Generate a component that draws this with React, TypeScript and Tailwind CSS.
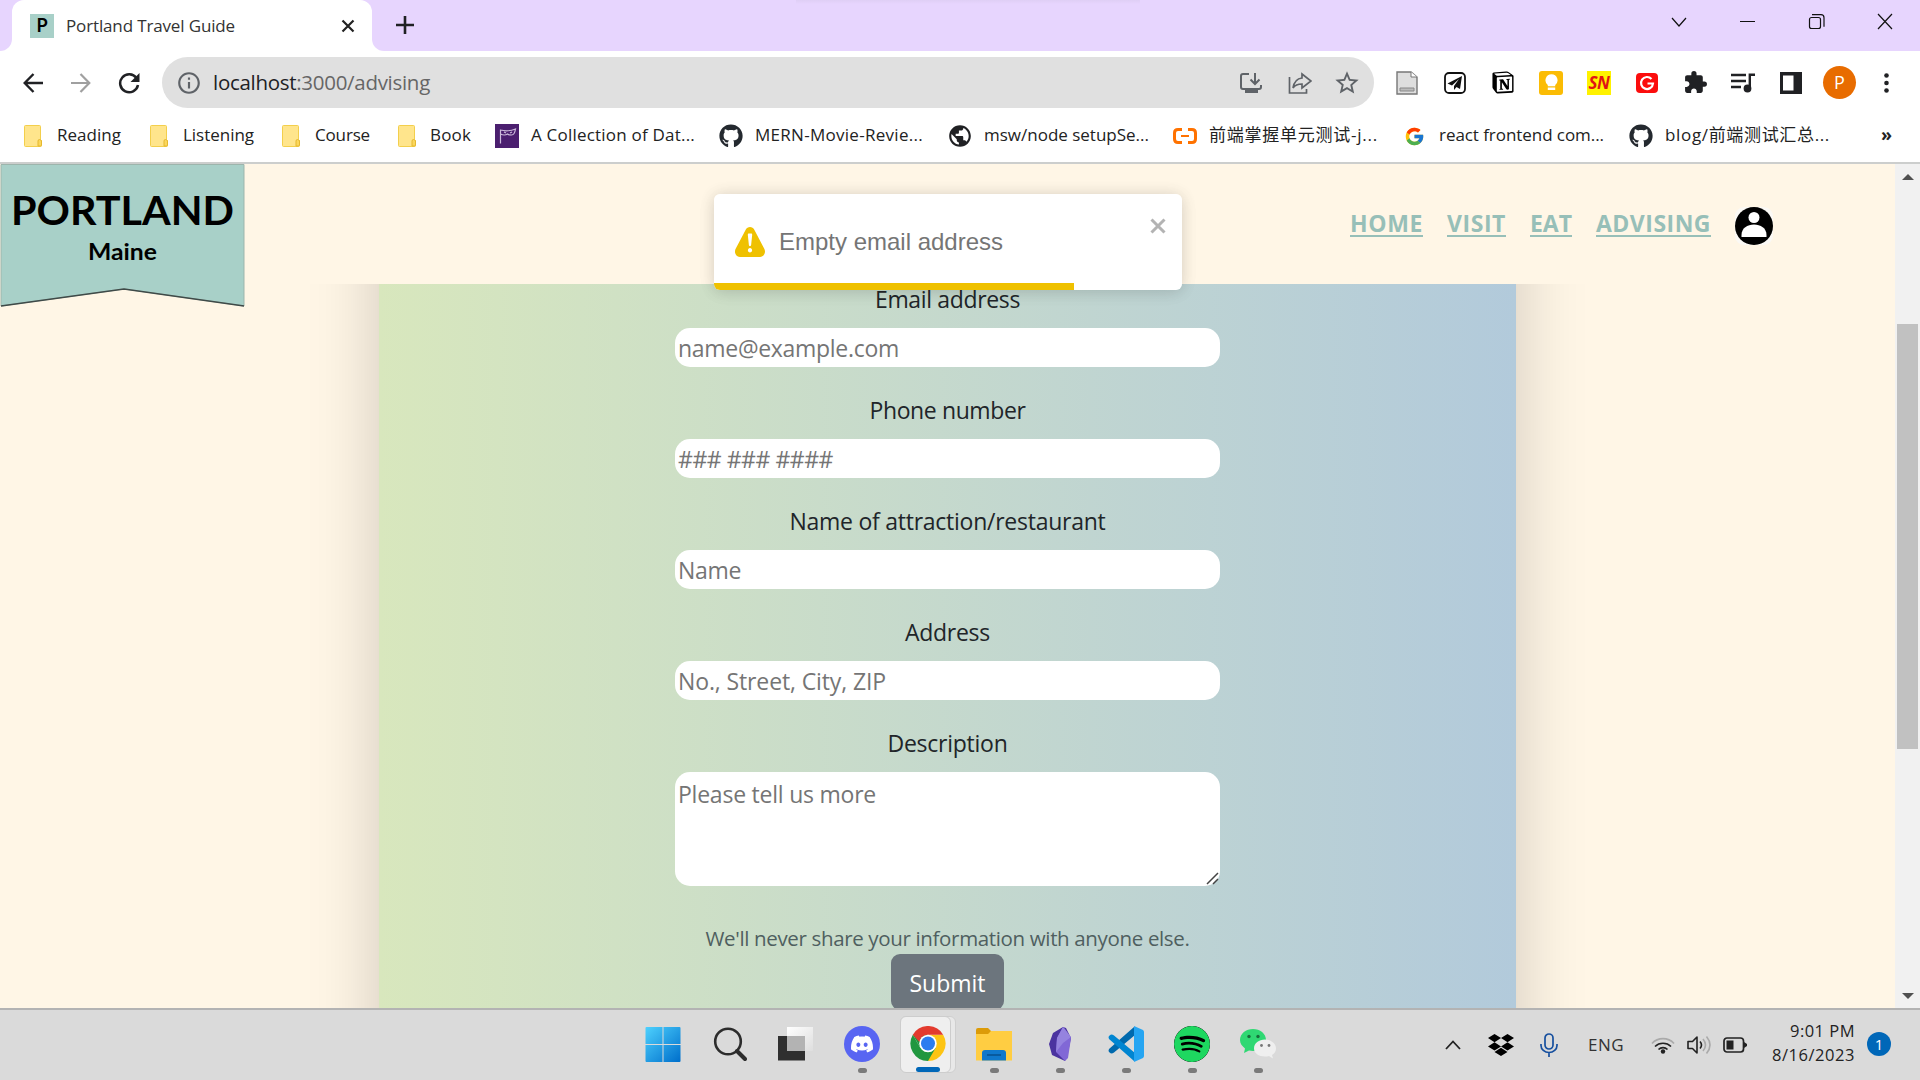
import { useLayoutEffect, useRef, useState, type ReactNode } from "react";
import { FaGithub, FaDropbox } from "react-icons/fa";
import { FcGoogle } from "react-icons/fc";
import { MdExtension, MdPublic, MdStarBorder, MdOutlineInfo } from "react-icons/md";
import { SiDiscord, SiSpotify, SiNotion } from "react-icons/si";

/** One line of text whose letter spacing is adjusted so it fills its box. */
function Fit({ className = "", children }: { className?: string; children: ReactNode }) {
  const box = useRef<HTMLSpanElement>(null);
  const inner = useRef<HTMLSpanElement>(null);
  const [spacing, setSpacing] = useState(0);
  useLayoutEffect(() => {
    if (!box.current || !inner.current) return;
    const count = (inner.current.textContent ?? "").length;
    const natural = inner.current.getBoundingClientRect().width;
    setSpacing((box.current.getBoundingClientRect().width - natural) / count);
  }, []);
  return (
    <span ref={box} className={`block shrink-0 whitespace-nowrap ${className}`}>
      <span ref={inner} style={{ letterSpacing: `${spacing}px` }}>
        {children}
      </span>
    </span>
  );
}

function Folder() {
  return (
    <svg viewBox="0 0 18 22" className="h-[22px] w-[18px] shrink-0">
      <path d="M.5 1.5q0-1 1-1h14q1 0 1 1v13q1 .5 1 2v4q0 1-1 1h-15q-1 0-1-1z" fill="#ffe58c" stroke="#f3cf4c" />
      <path d="M14 21v-5q0-1.500 1.500-1.500t2 1.500v4q0 1-1 1z" fill="#fbd75c" stroke="#e5b82f" />
    </svg>
  );
}

function Bookmark({ icon, gap, width, label }: { icon: ReactNode; gap: string; width: string; label: string }) {
  return (
    <div className={`flex shrink-0 items-center ${gap}`}>
      {icon}
      <Fit className={`pb-0.5 ${width}`}>{label}</Fit>
    </div>
  );
}

function TabStrip() {
  return (
    <div className="flex h-[51px] shrink-0 bg-[#e7d5fe]">
      <div className="flex w-3 items-end bg-white">
        <div className="h-full w-full rounded-br-xl bg-[#e7d5fe]" />
      </div>
      <div className="w-[360px] bg-[#e7d5fe]">
        <div className="flex h-full items-center rounded-t-xl bg-white pl-[18px]">
          <div className="flex h-6 w-6 items-center justify-center bg-[#a8d0c8] font-['Lato'] text-[18px] font-bold text-black">P</div>
          <Fit className="ml-3 w-[169px] text-[17px] text-[#333]">Portland Travel Guide</Fit>
          <svg viewBox="0 0 14 14" className="ml-[106px] h-[14px] w-[14px]">
            <path d="M1.500 1.500l11 11M12.500 1.500l-11 11" stroke="#222" strokeWidth="2.200" />
          </svg>
        </div>
      </div>
      <div className="w-3 bg-white">
        <div className="h-full w-full rounded-bl-xl bg-[#e7d5fe]" />
      </div>
      <svg viewBox="0 0 18 18" className="mt-4 ml-3 h-[18px] w-[18px]">
        <path d="M9 0v18M0 9h18" stroke="#202124" strokeWidth="2.600" />
      </svg>
      <div className="ml-[382px] h-1 w-[344px] bg-linear-to-b from-[#dfcff5] to-[#e7d5fe]" />
      <svg viewBox="0 0 224 18" className="mt-[13px] ml-auto mr-[27px] h-[18px] w-[224px]" fill="none" stroke="#111" strokeWidth="1.200">
        <path d="M3 5l7 8 7-8M71 8.500h15" />
        <rect x="140.500" y="4.500" width="11" height="11" rx="2" />
        <path d="M143 1.700h9q3 0 3 3v9M209 1l14 15M223 1l-14 15" />
      </svg>
    </div>
  );
}

function Toolbar() {
  return (
    <div className="flex h-[63px] shrink-0 items-center bg-white">
      <svg viewBox="0 0 20 20" className="ml-[23px] h-5 w-5" fill="none" stroke="#202124" strokeWidth="2.400">
        <path d="M20 10H2M10.500 1L1.700 10l8.800 9" />
      </svg>
      <svg viewBox="0 0 20 20" className="ml-7 h-5 w-5" fill="none" stroke="#a0a0a0" strokeWidth="2.200">
        <path d="M0 10h18M9.500 1l8.800 9-8.800 9" />
      </svg>
      <svg viewBox="0 0 22 22" className="ml-[27px] h-[22px] w-[22px]" fill="none" stroke="#202124" strokeWidth="2.500">
        <path d="M18.500 6A9 9 0 1 0 20 13" />
        <path d="M21.500 1v9h-9z" fill="#202124" stroke="none" />
      </svg>
      <div className="ml-[22px] flex h-[51px] w-[1212px] items-center rounded-full bg-[#e0e0e0]">
        <MdOutlineInfo className="ml-[14px] h-[26px] w-[26px] text-[#5f6368]" />
        <Fit className="ml-[11px] w-[217px] text-[20.500px] text-[#666]">
          <span className="text-[#202124]">localhost</span>:3000/advising
        </Fit>
        <svg viewBox="0 0 22 22" className="ml-auto h-[22px] w-[22px]" fill="none" stroke="#5f6368" strokeWidth="2">
          <path d="M9 2H3Q1 2 1 4v11q0 2 2 2h16q2 0 2-2v-2M15 1v11M10.500 7.500L15 12l4.500-4.500" />
          <path d="M5 17h13v4H5z" fill="#5f6368" stroke="none" />
        </svg>
        <svg viewBox="0 0 24 24" className="ml-[26px] h-6 w-6" fill="none" stroke="#5f6368" strokeWidth="1.700">
          <path d="M1.500 6v16h17v-4M14 3l9 7-9 7v-4c-4 0-7 1-9 4 1-6 4-9.500 9-10z" />
        </svg>
        <MdStarBorder className="mr-[13px] ml-[21px] h-[28px] w-[28px] text-[#5f6368]" />
      </div>
      <svg viewBox="0 0 22 24" className="ml-[22px] h-6 w-[22px]">
        <path d="M1 1h14l6 5v17H1z" fill="#dedede" stroke="#777" strokeWidth="1.400" />
        <path d="M15 1v5h6" fill="#fff" stroke="#777" />
        <path d="M4 17h14v3H4z" fill="#bbb" stroke="#888" />
      </svg>
      <svg viewBox="0 0 22 22" className="ml-[26px] h-[22px] w-[22px]">
        <rect x="1" y="1" width="20" height="20" rx="4" fill="#fff" stroke="#111" strokeWidth="1.800" />
        <path d="M18 4L3.500 11.500l4.500 2L15 7l-5 7v4l2.500-3 3.500 2z" fill="#111" />
      </svg>
      <SiNotion className="ml-[26px] h-[23px] w-[22px] text-black" />
      <div className="ml-[25px] flex h-6 w-6 items-center justify-center rounded-[3px] bg-[#fbbc04]">
        <svg viewBox="0 0 14 18" className="h-[17px] w-[13px]" fill="#fff">
          <path d="M7 0a6.500 6.500 0 0 1 4 11.600V13H3v-1.400A6.500 6.500 0 0 1 7 0zM3 14.500h8V17H3z" />
        </svg>
      </div>
      <div className="ml-6 flex h-6 w-6 items-center justify-center bg-[#fff200] font-['Open_Sans'] text-[17px] font-bold tracking-tight text-[#e01414] italic">SN</div>
      <div className="ml-[25px] flex h-5 w-[22px] items-center justify-center rounded-[4px] bg-[#fb0d0d]">
        <svg viewBox="0 0 16 16" className="h-4 w-4" fill="none" stroke="#fff" strokeWidth="2.200">
          <path d="M12.500 4A6 6 0 1 0 14 8.500H8.500" />
        </svg>
      </div>
      <MdExtension className="ml-[25px] h-[25px] w-[25px] text-[#202124]" />
      <svg viewBox="0 0 24 21" className="ml-[23px] h-[21px] w-6" stroke="#202124" strokeWidth="2.400">
        <path d="M0 3h15M0 9h15M0 15h10" />
        <path d="M18.800 17V2.800H24" fill="none" />
        <circle cx="16.500" cy="16.500" r="2.700" fill="#202124" />
      </svg>
      <svg viewBox="0 0 22 22" className="ml-[25px] h-[22px] w-[22px]">
        <path d="M0 0h22v22H0z" fill="#202124" />
        <path d="M3 3.500h10.500v15H3z" fill="#fff" />
      </svg>
      <div className="ml-[21px] flex h-[33px] w-[33px] items-center justify-center rounded-full bg-[#e86c00] font-['Open_Sans'] text-[18px] text-white">P</div>
      <svg viewBox="0 0 5 20" className="ml-7 h-5 w-[5px]" fill="#202124">
        <circle cx="2.500" cy="2.500" r="2.300" />
        <circle cx="2.500" cy="10" r="2.300" />
        <circle cx="2.500" cy="17.500" r="2.300" />
      </svg>
    </div>
  );
}

function Bookmarks() {
  return (
    <div className="flex h-12 shrink-0 items-center bg-white pb-1 pl-6 text-[17px] leading-6 text-[#222]">
      <Bookmark icon={<Folder />} gap="gap-[15px]" width="w-[64px]" label="Reading" />
      <div className="w-[29px] shrink-0" />
      <Bookmark icon={<Folder />} gap="gap-[15px]" width="w-[71px]" label="Listening" />
      <div className="w-[28px] shrink-0" />
      <Bookmark icon={<Folder />} gap="gap-[15px]" width="w-[55px]" label="Course" />
      <div className="w-[28px] shrink-0" />
      <Bookmark icon={<Folder />} gap="gap-[14px]" width="w-[41px]" label="Book" />
      <div className="w-[24px] shrink-0" />
      <Bookmark
        icon={
          <svg viewBox="0 0 24 24" className="h-6 w-6 shrink-0">
            <path d="M0 0h24v24H0z" fill="#4b1f6f" />
            <path d="M5.500 5.500v14M5.500 6q7 2 15-1-1 6-4 6-3 0-4-1-3 2-7 0M9 8l2 1M15 9l2-1" fill="none" stroke="#cdbcdc" strokeWidth="1.200" />
          </svg>
        }
        gap="gap-3"
        width="w-[164px]"
        label="A Collection of Dat..."
      />
      <div className="w-[24px] shrink-0" />
      <Bookmark icon={<FaGithub className="h-6 w-6 text-[#24292f]" />} gap="gap-3" width="w-[168px]" label="MERN-Movie-Revie..." />
      <div className="w-[24px] shrink-0" />
      <Bookmark icon={<MdPublic className="h-[26px] w-[26px] text-[#202124]" />} gap="gap-[11px]" width="w-[165px]" label="msw/node setupSe..." />
      <div className="w-[24px] shrink-0" />
      <Bookmark
        icon={
          <svg viewBox="0 0 24 16" className="h-4 w-6 shrink-0" fill="none" stroke="#ff7200" strokeWidth="3">
            <path d="M9 1.500H5Q1.500 1.500 1.500 5v6q0 3.500 3.500 3.500h4M15 1.500h4q3.500 0 3.500 3.500v6q0 3.500-3.500 3.500h-4" />
            <path d="M8 8h8" strokeWidth="2" />
          </svg>
        }
        gap="gap-3"
        width="w-[169px]"
        label="前端掌握单元测试-j..."
      />
      <div className="w-[26px] shrink-0" />
      <Bookmark icon={<FcGoogle className="h-[21px] w-[21px]" />} gap="gap-[14px]" width="w-[165px]" label="react frontend com..." />
      <div className="w-[25px] shrink-0" />
      <Bookmark icon={<FaGithub className="h-6 w-6 text-[#24292f]" />} gap="gap-3" width="w-[165px]" label="blog/前端测试汇总..." />
      <span className="ml-[51px] pb-1 text-[18px] font-bold">»</span>
    </div>
  );
}

function SiteHeader() {
  const link = "text-[23px] font-bold leading-8 underline decoration-2 underline-offset-[3px]";
  return (
    <header className="relative z-10 flex h-[120px] shrink-0 items-start bg-[#fff6e6] text-[#97bfb8]">
      <svg viewBox="0 0 246 144" className="absolute top-0 left-0 h-[144px] w-[246px]">
        <path d="M1 .5h243v141.500L124 125 1 142z" fill="#a8d0c8" stroke="#9db5ac" />
        <path d="M1 142l123-17 120 17" fill="none" stroke="#3f4a48" strokeWidth="1.600" />
        <text x="11" y="60.500" textLength="223" lengthAdjust="spacingAndGlyphs" className="font-['Lato'] text-[40px] font-bold">PORTLAND</text>
        <text x="88" y="96" textLength="69" lengthAdjust="spacingAndGlyphs" className="font-['Lato'] text-[23px] font-bold">Maine</text>
      </svg>
      <nav className="mt-[43px] ml-[1350px] flex items-start">
        <a className={link}><Fit className="w-[73px]">HOME</Fit></a>
        <a className={`${link} ml-6`}><Fit className="w-[59px]">VISIT</Fit></a>
        <a className={`${link} ml-6`}><Fit className="w-[42px]">EAT</Fit></a>
        <a className={`${link} ml-6`}><Fit className="w-[115px]">ADVISING</Fit></a>
        <svg viewBox="0 0 38 38" className="ml-6 h-[38px] w-[38px]">
          <rect width="38" height="38" rx="9" fill="#fbf9f5" />
          <circle cx="19" cy="19" r="19" fill="#000" />
          <circle cx="19" cy="10.500" r="5.500" fill="#fff" />
          <path d="M6.500 30v-2c0-7 6-10.500 12.500-10.500S31.500 21 31.500 28v2z" fill="#fff" />
        </svg>
      </nav>
    </header>
  );
}

function Field({ label, labelWidth, hint, hintWidth }: { label: string; labelWidth: string; hint: string; hintWidth: string }) {
  return (
    <div className="mb-[25px] flex w-full flex-col items-center">
      <Fit className={`${labelWidth} leading-9 text-[#212529]`}>{label}</Fit>
      <div className="mt-[11px] flex h-[39px] w-full items-center rounded-[15px] bg-white pt-0.5 pl-[3px] text-[#757575]">
        <Fit className={hintWidth}>{hint}</Fit>
      </div>
    </div>
  );
}

function AdviceForm() {
  return (
    <main className="-mt-[120px] ml-[379px] h-[1000px] w-[1137px] shrink-0 bg-linear-to-r from-[#d8e7bd] to-[#b2cadb] pt-[117px] shadow-[0_0_66px_rgba(0,0,0,0.19)]">
      <form className="ml-[296px] flex w-[545px] flex-col items-center text-[23px]">
        <Field label="Email address" labelWidth="w-[145px]" hint="name@example.com" hintWidth="w-[221px]" />
        <Field label="Phone number" labelWidth="w-[156px]" hint="### ### ####" hintWidth="w-[155px]" />
        <Field label="Name of attraction/restaurant" labelWidth="w-[316px]" hint="Name" hintWidth="w-[63px]" />
        <Field label="Address" labelWidth="w-[85px]" hint="No., Street, City, ZIP" hintWidth="w-[208px]" />
        <Fit className="w-[120px] leading-9 text-[#212529]">Description</Fit>
        <div className="mt-[11px] flex h-[114px] w-full items-start justify-between rounded-[15px] bg-white pt-1 pl-[3px] text-[#757575]">
          <Fit className="w-[198px] leading-9">Please tell us more</Fit>
          <svg viewBox="0 0 13 13" className="mr-px mb-px h-[13px] w-[13px] self-end">
            <path d="M1 12L12 1M7 12l5-5" stroke="#444" strokeWidth="1.500" />
          </svg>
        </div>
        <Fit className="mt-[37px] w-[484px] text-[20.500px] leading-[31px] text-[#4f5f60]">We'll never share your information with anyone else.</Fit>
        <div className="flex h-14 w-[113px] shrink-0 items-center justify-center rounded-[9px] bg-[#6c757d] pt-0.5 text-white">
          <Fit className="w-[76px]">Submit</Fit>
        </div>
      </form>
    </main>
  );
}

function Toast() {
  return (
    <div className="absolute top-[30px] left-[714px] z-20 h-24 w-[468px] rounded-md shadow-[0_1px_15px_rgba(0,0,0,0.13),0_2px_20px_rgba(0,0,0,0.05)]">
      <div className="relative flex h-full items-start overflow-hidden rounded-md bg-white font-['Liberation_Sans'] text-[24px] text-[#757575]">
        <svg viewBox="0 0 24 24" className="mt-[33px] ml-[21px] h-[30px] w-[30px]">
          <path d="M23.320 17.191L15.438 2.184C14.728.833 13.416 0 11.996 0c-1.420 0-2.733.833-3.443 2.184L.533 17.448a4.744 4.744 0 000 4.368C1.243 23.167 2.555 24 3.975 24h16.050C22.220 24 24 22.044 24 19.632c0-.904-.251-1.746-.680-2.440zm-9.622 1.460c0 1.033-.724 1.823-1.698 1.823s-1.698-.790-1.698-1.822v-.043c0-1.028.724-1.822 1.698-1.822s1.698.790 1.698 1.822v.043zm.039-12.285l-.840 8.060c-.057.581-.408.943-.897.943-.490 0-.840-.367-.896-.942l-.840-8.065c-.057-.624.250-1.095.779-1.095h1.910c.528.005.840.476.784 1.100z" fill="#efc100" />
        </svg>
        <Fit className="mt-[30px] ml-[14px] w-[224px] leading-9">Empty email address</Fit>
        <svg viewBox="0 0 16 16" className="mt-6 ml-[147px] h-4 w-4">
          <path d="M1.500 1.500l13 13M14.500 1.500l-13 13" stroke="#b3b3b3" strokeWidth="3" />
        </svg>
        <div className="absolute bottom-0 left-0 h-[7px] w-[360px] bg-[#efc100]" />
      </div>
    </div>
  );
}

function Scrollbar() {
  return (
    <div className="flex w-[25px] shrink-0 flex-col items-center bg-[#f1f1f1]">
      <svg viewBox="0 0 12 6" className="mt-[10px] h-1.5 w-3" fill="#505050"><path d="M6 0l6 6H0z" /></svg>
      <div className="mt-36 h-[425px] w-[21px] bg-[#c1c1c1]" />
      <svg viewBox="0 0 12 6" className="mt-auto mb-[9px] h-1.5 w-3" fill="#505050"><path d="M0 0h12L6 6z" /></svg>
    </div>
  );
}

function TaskIcon({ children, mark = true }: { children: ReactNode; mark?: boolean }) {
  return (
    <div className="flex h-full w-[66px] shrink-0 flex-col items-center pt-4">
      <div className="flex h-9 w-9 items-center justify-center">{children}</div>
      <div className={mark ? "mt-1.5 h-[5px] w-[9px] rounded-full bg-[#7a7a7a]" : "h-0"} />
    </div>
  );
}

function ChromeLogo() {
  return (
    <svg viewBox="0 0 36 36" className="h-9 w-9">
      <path d="M18 18V9h15.600A18 18 0 0 1 18 36z" fill="#fdc413" />
      <path d="M18 18l7.800 4.500L18 36A18 18 0 0 1 2.400 9l7.800 13.500z" fill="#21973f" />
      <path d="M10.200 22.500L2.400 9 18 9z" fill="#21973f" />
      <path d="M2.400 9A18 18 0 0 1 33.600 9H18a9 9 0 0 0-8.800 7.500z" fill="#e33b2e" />
      <circle cx="18" cy="18" r="9" fill="#fff" />
      <circle cx="18" cy="18" r="7.200" fill="#2b7df0" />
    </svg>
  );
}

function Taskbar() {
  return (
    <footer className="flex h-[72px] shrink-0 border-t-2 border-[#b3b3b3] bg-[#dadada]">
      <div className="ml-[631px] flex h-full">
        <TaskIcon mark={false}>
          <svg viewBox="0 0 36 36" className="mr-[3px] h-9 w-9 shrink-0">
            <defs>
              <linearGradient id="win" gradientUnits="userSpaceOnUse" x1="0" y1="0" x2="34" y2="36">
                <stop stopColor="#4fd3ff" />
                <stop offset="1" stopColor="#0070cc" />
              </linearGradient>
            </defs>
            <path d="M.5 2q0-1 1-1h16v17H.500zM18.500 1h16q1 0 1 1v16h-17zM.5 19h17v17h-16q-1 0-1-1zM18.500 19h17v16q0 1-1 1h-16z" fill="url(#win)" />
          </svg>
        </TaskIcon>
        <TaskIcon mark={false}>
          <svg viewBox="0 0 36 36" className="mr-0.5 h-9 w-9 shrink-0" fill="none" stroke="#2c2c2c">
            <circle cx="17" cy="15.500" r="12.800" strokeWidth="2.600" />
            <path d="M26 25l8 8" strokeWidth="4" strokeLinecap="round" />
          </svg>
        </TaskIcon>
        <TaskIcon mark={false}>
          <svg viewBox="0 0 36 36" className="mr-0.5 h-9 w-9 shrink-0">
            <defs>
              <linearGradient id="pane" x1="0" y1="0" x2="1" y2="1">
                <stop stopColor="#fff" />
                <stop offset="1" stopColor="#dedede" />
              </linearGradient>
            </defs>
            <path d="M1 10h27v24.500H1z" fill="#2f2f2f" />
            <path d="M10 1h26v24H10z" fill="url(#pane)" />
            <path d="M10 10h18v15H10z" fill="#b3b3b3" />
          </svg>
        </TaskIcon>
        <TaskIcon>
          <div className="flex h-9 w-9 items-center justify-center rounded-full bg-[#5865f2]">
            <SiDiscord className="h-[22px] w-[22px] text-white" />
          </div>
        </TaskIcon>
        <div className="flex h-full w-[66px] items-start pt-1.5 pl-[5px]">
          <div className="h-[57px] w-[56px] rounded-md border border-[#cfcfcf] bg-[#e8e8e8]">
            <div className="-mt-px -ml-px flex h-[57px] w-[51px] flex-col items-center rounded-md border border-[#cdcdcd] bg-[#efefef] pt-[9px] pl-[5px]">
              <ChromeLogo />
              <div className="mt-1.5 h-[5px] w-6 shrink-0 rounded-full bg-[#0067b8]" />
            </div>
          </div>
        </div>
        <TaskIcon>
          <svg viewBox="0 0 36 36" className="h-9 w-9">
            <path d="M0 4q0-2 2-2h10l3 3v4H0z" fill="#dc9b08" />
            <path d="M0 8h12l3-3h21v29.500H0z" fill="#ffcd42" />
            <path d="M6 34.500V27q0-3 3-3h18q3 0 3 3v7.500z" fill="#0f78cc" />
            <path d="M11 29h14" stroke="#07508f" strokeWidth="1.500" />
          </svg>
        </TaskIcon>
        <TaskIcon>
          <svg viewBox="0 0 22 34" className="h-[34px] w-[22px]">
            <path d="M14 0L4 6 0 17l3 11 13 6 3-8 3-15-5-10z" fill="#4b33a0" />
            <path d="M14 0l2 2 6 9-3 20-3 3L7 25l1-14z" fill="#8168d6" />
            <path d="M14 0l8 10-8 6-7 9 1-14z" fill="#9583df" />
          </svg>
        </TaskIcon>
        <TaskIcon>
          <svg viewBox="0 0 36 36" className="h-9 w-9">
            <path d="M26 1L1 23q-1 2 0 3l2 1.500q2 0 3-1L27 9z" fill="#0069ad" />
            <path d="M26 35L1 13q-1-2 0-3l2-1.500q2 0 3 1L27 27z" fill="#0085d1" />
            <path d="M26 0l9 4q1 1 1 2v24q0 1-1 2l-9 4z" fill="#26a5f2" />
          </svg>
        </TaskIcon>
        <TaskIcon><SiSpotify className="h-9 w-9 rounded-full bg-black text-[#1ed760]" /></TaskIcon>
        <TaskIcon>
          <svg viewBox="0 0 36 36" className="h-9 w-9">
            <path d="M13 3c7 0 13 4.500 13 11s-5 11-13 11l-4-.500L4 27l1-4.500C2 20 0 17.500 0 14 0 7.500 6 3 13 3z" fill="#2fd873" />
            <path d="M25 13.500c6 0 11 4 11 9 0 3-1.500 5-4 6.500l1 3.500-4-2.500c-8 2-15-2-15-7.500s5-9 11-9z" fill="#efefef" />
            <g fill="#176e3b"><circle cx="9" cy="10.500" r="1.700" /><circle cx="18" cy="10.500" r="1.700" /></g>
            <g fill="#777"><circle cx="21.500" cy="19.500" r="1.400" /><circle cx="29" cy="19.500" r="1.400" /></g>
          </svg>
        </TaskIcon>
      </div>
      <div className="ml-[154px] flex h-[69px] items-center text-[17px] text-[#222]">
        <svg viewBox="0 0 16 10" className="h-[10px] w-4" fill="none" stroke="#222" strokeWidth="1.800"><path d="M1 9l7-7.500L15 9" /></svg>
        <FaDropbox className="ml-[27px] h-[26px] w-[26px] text-black" />
        <svg viewBox="0 0 18 24" className="ml-[26px] h-6 w-[18px]" fill="none" stroke="#164f9e" strokeWidth="1.700">
          <rect x="5" y="1" width="8" height="15" rx="4" />
          <path d="M1 11v1.500a8 7 0 0 0 16 0V11M9 19.500V24" />
        </svg>
        <Fit className="ml-[30px] w-[36px] text-[17px] text-[#333]">ENG</Fit>
        <svg viewBox="0 0 24 18" className="ml-[27px] h-[18px] w-6" fill="none" strokeWidth="1.700">
          <path d="M1 7.500a15 15 0 0 1 22 0" stroke="#aaa" />
          <path d="M4 10.500a11.500 11.500 0 0 1 16 0M7.500 13.500a6.500 6.500 0 0 1 9 0" stroke="#222" />
          <circle cx="12" cy="15.500" r="2.200" fill="#222" />
        </svg>
        <svg viewBox="0 0 24 20" className="ml-3 h-5 w-6" fill="none" strokeWidth="1.600">
          <path d="M1 6.500h4.500L10 2v16l-4.500-4.500H1z" stroke="#222" strokeLinejoin="round" />
          <path d="M13 6.500q3 3.500 0 7" stroke="#222" />
          <path d="M16 4q5 6 0 12M19.500 1.500q7 8.500 0 17" stroke="#aaa" />
        </svg>
        <svg viewBox="0 0 24 16" className="ml-3 h-4 w-6">
          <rect x="1" y="1" width="19.500" height="14" rx="3" fill="none" stroke="#222" strokeWidth="1.700" />
          <path d="M3.500 3.500h7v9h-7zM21 5l3 2v2l-3 2z" fill="#222" />
        </svg>
        <div className="ml-[25px] flex w-[83px] flex-col items-end pb-[3px] leading-6">
          <Fit className="w-[65px] text-[16.500px]">9:01 PM</Fit>
          <Fit className="w-[83px] text-[16.500px]">8/16/2023</Fit>
        </div>
        <div className="mb-px ml-3 flex h-6 w-6 items-center justify-center rounded-full bg-[#0067b8] text-[15px] leading-6 text-white">1</div>
      </div>
    </footer>
  );
}

export default function App() {
  return (
    <div className="flex h-[1080px] w-[1920px] flex-col overflow-hidden bg-white font-['Open_Sans','Noto_Sans_CJK_SC',sans-serif]">
      <TabStrip />
      <Toolbar />
      <Bookmarks />
      <div className="h-0.5 shrink-0 bg-[#cccecd]" />
      <div className="flex h-[844px] shrink-0">
        <div className="relative flex w-[1895px] flex-col overflow-hidden bg-[#fff6e6]">
          <SiteHeader />
          <AdviceForm />
          <Toast />
        </div>
        <Scrollbar />
      </div>
      <Taskbar />
    </div>
  );
}
